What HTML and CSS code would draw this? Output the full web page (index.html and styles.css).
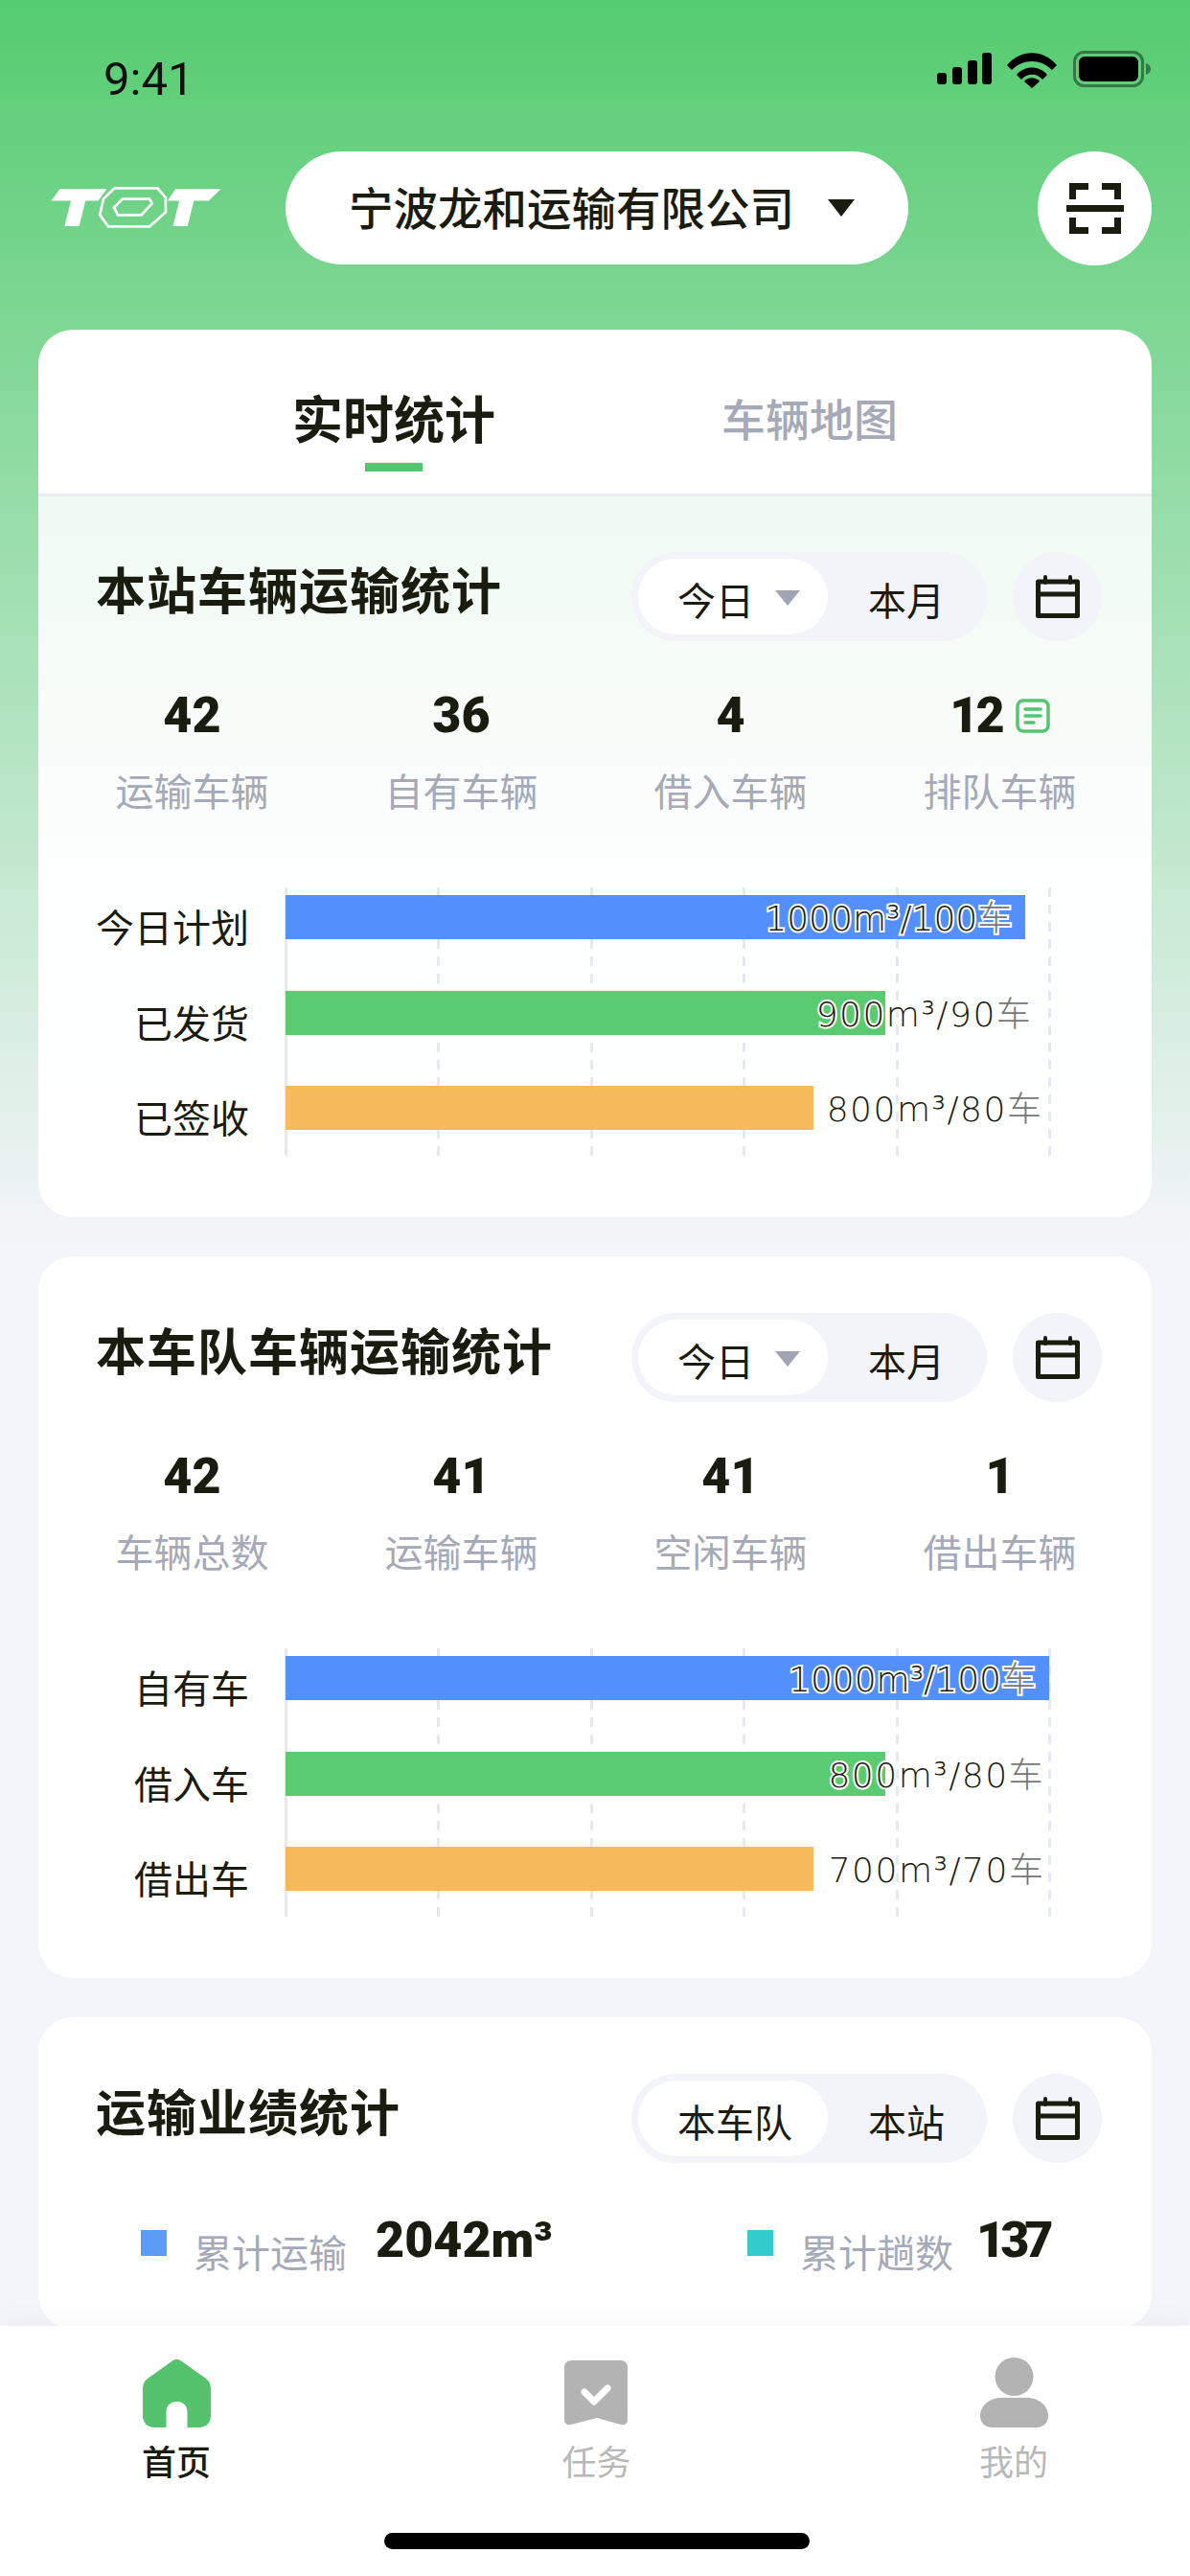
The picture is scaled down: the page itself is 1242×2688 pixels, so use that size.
FILE: index.html
```html
<!DOCTYPE html>
<html lang="zh-CN">
<head>
<meta charset="utf-8">
<title>首页</title>
<link rel="stylesheet" href="styles.css">
</head>
<body>
<div class="phone">
  <div class="status">
    <span class="time">9:41</span>
    <div class="status-icons">
      <svg class="sig" viewBox="0 0 57 33"><rect x="0" y="21" width="10" height="12" rx="3"/><rect x="16" y="15" width="10" height="18" rx="3"/><rect x="32" y="8" width="10" height="25" rx="3"/><rect x="47" y="0" width="10" height="33" rx="3"/></svg>
      <svg class="wifi" viewBox="0 0 52 37"><path d="M0 13 C14 -4 38 -4 52 13 L47 18 C35 6 17 6 5 18Z"/><path d="M10 23 C18 13 34 13 42 23 L37 28 C31 21 21 21 15 28Z"/><path d="M18 30 C22 25 30 25 34 30 L26 37 Z"/></svg>
      <svg class="batt" viewBox="0 0 81 38"><rect x="1.500" y="1.500" width="71" height="35" rx="10" fill="none" stroke="#000" stroke-opacity=".42" stroke-width="3"/><rect x="6" y="6" width="62" height="26" rx="6"/><path d="M76 13 C79 14 81 16 81 19 C81 22 79 24 76 25Z" fill-opacity=".42"/></svg>
    </div>
  </div>
  <div class="head">
    <svg class="logo" viewBox="160 138 535 130"><path fill="#fff" d="M160 182 187 145H335L308 182H268L248 262H202L222 182Z"/><path fill="#fff" d="M527 182 552 145H695L657 182H610L590 262H544L564 182Z"/><path fill="none" stroke="#fff" stroke-width="8" d="M360 142H495L521 172V218L470 263H340L313 226 325 175Z"/><path fill="none" stroke="#fff" stroke-width="8" d="M385 176H470L478 190 444 227H370L358 203Z"/></svg>
    <div class="company"><span>宁波龙和运输有限公司</span><i class="tri"></i></div>
    <div class="scan">
      <svg viewBox="0 0 60 53"><path fill="none" stroke="#1a1c0f" stroke-width="7" d="M6.500 17V3.500H23M53.500 17V3.500H37M6.500 36V49.500H23M53.500 36V49.500H37"/><rect x="0" y="23" width="60" height="7" fill="#1a1c0f"/></svg>
    </div>
  </div>
  <div class="content">
    <section class="card">
      <div class="tabs">
        <div class="tab on">实时统计</div>
        <div class="tab">车辆地图</div>
      </div>
      <div class="body first">
        <div class="row-head">
          <h2>本站车辆运输统计</h2>
          <div class="tools">
            <div class="seg"><span class="seg-on">今日<i class="mini"></i></span><span class="seg-off">本月</span></div>
            <div class="cal"><svg viewBox="0 0 46 45"><path fill="none" stroke="#1a1c0f" stroke-width="5" stroke-linejoin="round" d="M2.500 7H43.500V42.500H2.500ZM2.500 20H43.500"/><path stroke="#1a1c0f" stroke-width="4" stroke-linecap="round" d="M10 2V8M36 2V8"/></svg></div>
          </div>
        </div>
        <div class="stats">
          <div class="stat"><b>42</b><span>运输车辆</span></div>
          <div class="stat"><b>36</b><span>自有车辆</span></div>
          <div class="stat"><b>4</b><span>借入车辆</span></div>
          <div class="stat"><b class="with-note">12<svg class="note" viewBox="0 0 36 36"><rect x="2" y="2" width="32" height="32" rx="6" fill="none" stroke="#55c56f" stroke-width="3.500"/><path stroke="#55c56f" stroke-width="3.500" stroke-linecap="round" d="M10 11H26M10 18H26M10 25H19"/></svg></b><span>排队车辆</span></div>
        </div>
        <div class="chart">
          <div class="grid"><i class="solid"></i><i></i><i></i><i></i><i></i><i></i></div>
          <div class="row"><label>今日计划</label><div class="track"><div class="bar blue" style="width:96.900%"></div><span class="val in-blue">1000m³/100<em>车</em></span></div></div>
          <div class="row"><label>已发货</label><div class="track"><div class="bar green" style="width:78.500%"></div><span class="val in-green">900m³/90<em>车</em></span></div></div>
          <div class="row"><label>已签收</label><div class="track"><div class="bar orange" style="width:69.100%"></div><span class="val in-orange">800m³/80<em>车</em></span></div></div>
        </div>
      </div>
    </section>

    <section class="card">
      <div class="body">
        <div class="row-head">
          <h2>本车队车辆运输统计</h2>
          <div class="tools">
            <div class="seg"><span class="seg-on">今日<i class="mini"></i></span><span class="seg-off">本月</span></div>
            <div class="cal"><svg viewBox="0 0 46 45"><path fill="none" stroke="#1a1c0f" stroke-width="5" stroke-linejoin="round" d="M2.500 7H43.500V42.500H2.500ZM2.500 20H43.500"/><path stroke="#1a1c0f" stroke-width="4" stroke-linecap="round" d="M10 2V8M36 2V8"/></svg></div>
          </div>
        </div>
        <div class="stats">
          <div class="stat"><b>42</b><span>车辆总数</span></div>
          <div class="stat"><b>41</b><span>运输车辆</span></div>
          <div class="stat"><b>41</b><span>空闲车辆</span></div>
          <div class="stat"><b>1</b><span>借出车辆</span></div>
        </div>
        <div class="chart">
          <div class="grid"><i class="solid"></i><i></i><i></i><i></i><i></i><i></i></div>
          <div class="row"><label>自有车</label><div class="track"><div class="bar blue" style="width:100%"></div><span class="val in-blue">1000m³/100<em>车</em></span></div></div>
          <div class="row"><label>借入车</label><div class="track"><div class="bar green" style="width:78.600%"></div><span class="val in-green2">800m³/80<em>车</em></span></div></div>
          <div class="row"><label>借出车</label><div class="track"><div class="bar orange" style="width:69.100%"></div><span class="val in-orange2">700m³/70<em>车</em></span></div></div>
        </div>
      </div>
    </section>

    <section class="card last">
      <div class="body">
        <div class="row-head">
          <h2>运输业绩统计</h2>
          <div class="tools">
            <div class="seg"><span class="seg-on">本车队</span><span class="seg-off">本站</span></div>
            <div class="cal"><svg viewBox="0 0 46 45"><path fill="none" stroke="#1a1c0f" stroke-width="5" stroke-linejoin="round" d="M2.500 7H43.500V42.500H2.500ZM2.500 20H43.500"/><path stroke="#1a1c0f" stroke-width="4" stroke-linecap="round" d="M10 2V8M36 2V8"/></svg></div>
          </div>
        </div>
        <div class="legend">
          <div class="leg"><i class="sq sq-blue"></i><span>累计运输</span><b>2042m³</b></div>
          <div class="leg"><i class="sq sq-teal"></i><span>累计趟数</span><b class="tight">137</b></div>
        </div>
      </div>
    </section>
  </div>
  <nav class="tabbar">
    <div class="items">
      <div class="item active">
        <svg viewBox="0 -2 71 73"><path fill="#55c26d" d="M31 1.500C33.500-.5 37.500-.5 40 1.500L66 20C69.500 23 71 26 71 30V59C71 66 66 71 59 71H46.500V55C46.500 48 42 44 35.500 44S24.500 48 24.500 55V71H12C5 71 0 66 0 59V30C0 26 1.500 23 5 20Z"/></svg>
        <span>首页</span>
      </div>
      <div class="item">
        <svg viewBox="0 -2 71 73"><path fill="#b3b3b3" d="M10 1H61C65 1 68 4 68 8V63C68 67 65 69 61 68L36 61 9 68C5 69 2 67 2 63V8C2 4 5 1 10 1Z"/><path fill="none" stroke="#fff" stroke-width="7" stroke-linecap="round" stroke-linejoin="round" d="M23 34 33 44 47 30"/></svg>
        <span>任务</span>
      </div>
      <div class="item">
        <svg viewBox="0 0 71 73"><ellipse cx="35.500" cy="20" rx="20" ry="20" fill="#b3b3b3"/><path fill="#b3b3b3" d="M22 42H49C62 42 71 51 71 61 71 68 66 73 59 73H12C5 73 0 68 0 61 0 51 9 42 22 42Z"/></svg>
        <span>我的</span>
      </div>
    </div>
    <div class="home-bar"></div>
  </nav>
</div>
</body>
</html>
```

FILE: styles.css
```css
* { box-sizing: border-box; margin: 0; padding: 0; }
html, body { width: 1242px; height: 2688px; overflow: hidden; }
body { font-family: "Noto Sans CJK SC", "Noto Sans", sans-serif; color: #1a1c0f; }

.phone {
  width: 1242px; height: 2688px; display: flex; flex-direction: column; overflow: hidden;
  background: linear-gradient(180deg, #55cc70 0, #f4f5fa 1300px);
}

/* status bar */
.status { height: 158px; flex: none; display: flex; justify-content: space-between; padding: 54px 41px 0 108px; }
.time { font: 400 49px/58px Roboto, sans-serif; color: #111; }
.status-icons { display: flex; align-items: flex-start; margin-top: -1px; }
.status-icons svg { display: block; }
.sig { width: 57px; height: 33px; margin-top: 2px; margin-right: 16px; }
.wifi { width: 52px; height: 37px; margin-top: 2px; margin-right: 17px; }
.batt { width: 81px; height: 38px; }

/* header */
.head { height: 118px; flex: none; display: flex; align-items: center; padding: 0 40px 0 53px; }
.logo { width: 178px; height: 43px; flex: none; margin-right: 67px; margin-top: -1px; }
.company {
  width: 650px; height: 118px; border-radius: 59px; background: #fff; display: flex; align-items: center;
  padding: 0 0 5px 66px; font-size: 46.500px; line-height: 60px; font-weight: 500;
}
.tri { width: 0; height: 0; margin-left: 35px; margin-top: 5px; border-left: 14px solid transparent; border-right: 14px solid transparent; border-top: 18px solid #1a1c0f; }
.scan { width: 119px; height: 119px; border-radius: 50%; background: #fff; margin-left: auto; display: flex; align-items: center; justify-content: center; }
.scan svg { width: 60px; height: 53px; display: block; }

/* cards */
.content { flex: 1; min-height: 0; overflow: hidden; padding: 68px 40px 0; }
.card { background: #fff; border-radius: 36px; margin-bottom: 41px; overflow: hidden; }
.card.last { height: 325px; }
.tabs { height: 174px; display: flex; border-bottom: 3px solid #e9ecf2; padding-left: 265px; }
.tab { font-size: 46px; line-height: 60px; font-weight: 500; color: #a5a9b8; padding-top: 61px; position: relative; margin-right: 236px; }
.tab.on { font-size: 53px; font-weight: 700; color: #1a1c0f; }
.tab.on::after { content: ""; position: absolute; left: 76px; top: 139px; width: 60px; height: 9px; background: #55c56f; }
.body { padding: 59px 52px 64px 60px; }
.body.first { background: linear-gradient(180deg, #f0faf3 0, #fdfefe 52%, #fff 100%); padding-top: 58px; }

.row-head { height: 93px; display: flex; justify-content: space-between; align-items: flex-start; }
h2 { font-size: 52px; line-height: 70px; font-weight: 700; letter-spacing: 1px; margin-top: 3px; }
.tools { display: flex; }
.seg { width: 371px; height: 93px; border-radius: 47px; background: #f3f4f9; padding: 7px; display: flex; font-size: 40px; }
.seg-on { width: 198px; height: 79px; border-radius: 40px; background: #fff; display: flex; align-items: center; padding-left: 41px; line-height: 60px; padding-top: 4px; }
.seg-off { padding-left: 42px; line-height: 60px; padding-top: 12px; }
.mini { width: 0; height: 0; margin-left: 22px; margin-top: -2px; border-left: 13px solid transparent; border-right: 13px solid transparent; border-top: 16px solid #a0a4b5; }
.cal { width: 93px; height: 93px; border-radius: 50%; background: #f3f4f9; margin-left: 27px; display: flex; align-items: center; justify-content: center; }
.cal svg { width: 46px; height: 45px; display: block; }

/* stats */
.stats { display: grid; grid-template-columns: repeat(4, 281px); margin: 48px -34px 0 -40px; }
.stat { text-align: center; }
.stat b { display: flex; justify-content: center; align-items: center; font: 900 52px/60px Roboto, sans-serif; }
.stat span { display: block; margin-top: 19px; font-size: 40px; line-height: 56px; color: #a5a9b8; }
.stat b.with-note { letter-spacing: -3px; }
.note { width: 36px; height: 36px; margin-left: 14px; }

/* chart */
.chart { position: relative; height: 280px; margin-top: 74px; padding-top: 8px; }
.grid { position: absolute; left: 197px; top: 0; width: 800px; height: 280px; display: flex; justify-content: space-between; }
.grid i { width: 3px; background: repeating-linear-gradient(180deg, #e6e8f2 0 10px, transparent 10px 18px); }
.grid i.solid { background: #e6e8f2; }
.row { position: relative; display: flex; height: 99.500px; }
.row label { width: 160px; margin-right: 38px; text-align: right; white-space: nowrap; font-size: 40px; line-height: 46px; margin-top: 9px; flex: none; }
.track { width: 797px; flex: none; height: 46px; display: flex; align-items: center; }
.bar { height: 46px; flex: none; }
.blue { background: #5390fe; }
.green { background: #5bcb72; }
.orange { background: #f4ba5b; }
.val {
  flex: none; white-space: nowrap; font: 200 36px/46px "DejaVu Sans", "Noto Sans CJK SC", sans-serif; color: #1a1c0f;
  -webkit-text-stroke: 4px #fff; paint-order: stroke fill;
}
.val em { font: 300 36px/46px "Noto Sans CJK SC", sans-serif; color: #777; letter-spacing: 0; }
.in-blue { margin-left: -272px; width: 256px; letter-spacing: 0; }
.in-green { margin-left: -72px; width: 225px; letter-spacing: 1.500px; }
.in-orange { margin-left: 14px; width: 224px; letter-spacing: 1.500px; }
.in-green2 { margin-left: -60px; width: 225px; letter-spacing: 1.500px; }
.in-orange2 { margin-left: 16px; width: 225px; letter-spacing: 1.500px; }

/* legend */
.legend { display: flex; margin-top: 53px; padding-left: 47px; }
.leg { display: flex; align-items: flex-start; }
.leg:first-child { width: 633px; }
.sq { width: 27px; height: 27px; margin-top: 17px; margin-right: 28px; }
.sq-blue { background: #5b9cf6; }
.sq-teal { background: #33cccc; }
.leg span { font-size: 40px; line-height: 56px; color: #a5a9b8; margin-top: 11px; margin-right: 30px; }
.leg b { font: 900 52px/52px Roboto, sans-serif; margin-top: 2px; }
.leg b.tight { letter-spacing: -5px; margin-left: -6px; }

/* tab bar */
.tabbar { height: 261px; flex: none; background: #fff; box-shadow: 0 -8px 24px rgba(0, 0, 0, .03); position: relative; padding: 33px 148px 0 148px; }
.items { display: flex; justify-content: space-between; }
.item { width: 72px; display: flex; flex-direction: column; align-items: center; font-size: 36px; line-height: 44px; color: #b8b8b8; }
.item:nth-child(2) { margin-left: 3px; }
.item svg { width: 71px; height: 73px; display: block; margin-bottom: 12px; }
.item.active { color: #1a1c0f; font-weight: 500; }
.home-bar { position: absolute; left: 401px; top: 216px; width: 444px; height: 17px; border-radius: 9px; background: #000; }
```
